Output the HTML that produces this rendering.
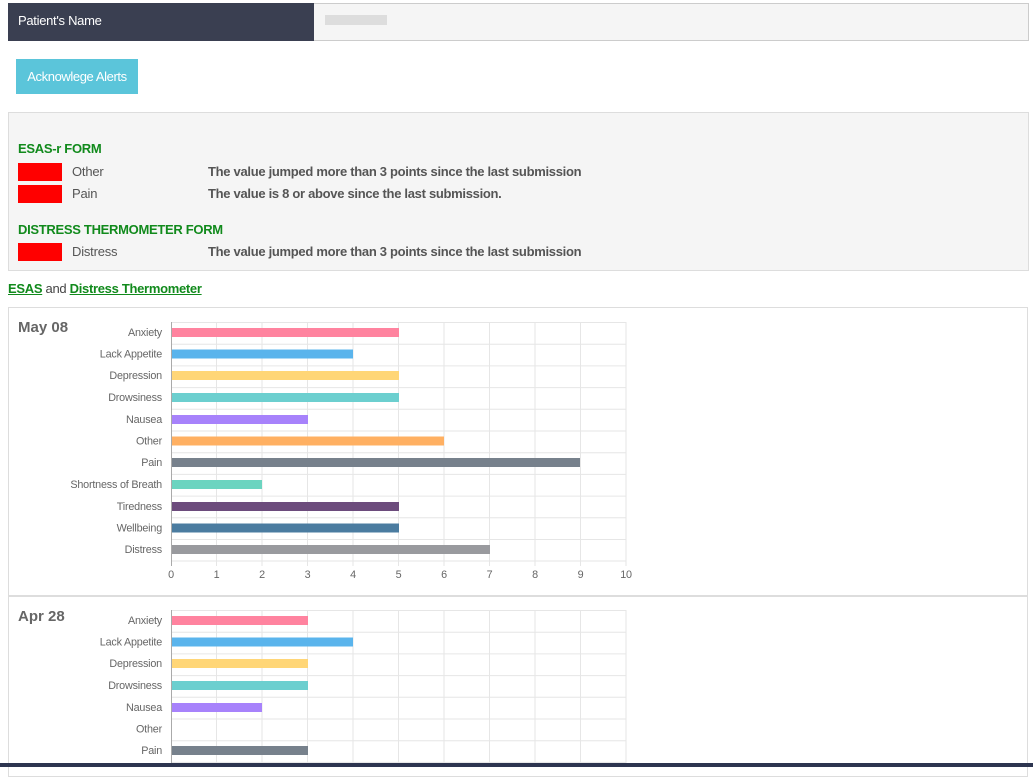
<!DOCTYPE html>
<html><head><meta charset="utf-8"><style>
body{margin:0;width:1033px;height:767px;overflow:hidden;background:#fff;font-family:"Liberation Sans",sans-serif;position:relative}
.a{position:absolute}
.lbl{font-size:13px;color:#555;letter-spacing:-0.2px}
.msg{font-size:13px;color:#555;font-weight:bold;letter-spacing:-0.3px}
.red{position:absolute;left:18px;width:44px;height:18px;background:#f00}
.h{font-size:13px;color:#118a1c;font-weight:bold;letter-spacing:-0.3px}
</style></head><body>
<div class="a" style="left:8px;top:3px;width:1019px;height:36px;border:1px solid #ccc;background:#f5f5f5"></div>
<div class="a" style="left:8px;top:3px;width:306px;height:38px;background:#3a3f51"></div>
<div class="a" style="left:18px;top:13px;color:#fff;font-size:13px;letter-spacing:-0.3px">Patient's Name</div>
<div class="a" style="left:325px;top:15px;width:62px;height:10px;background:#ddd"></div>
<div class="a" style="left:16px;top:59px;width:122px;height:35px;background:#5bc5da;color:#fff;font-size:13px;line-height:35px;text-align:center;letter-spacing:-0.4px">Acknowlege Alerts</div>
<div class="a" style="left:8px;top:112px;width:1019px;height:157px;background:#f5f5f5;border:1px solid #ddd"></div>
<div class="a h" style="left:18px;top:141px">ESAS-r FORM</div>
<div class="red" style="top:163px"></div><div class="a lbl" style="left:72px;top:164px">Other</div><div class="a msg" style="left:208px;top:164px">The value jumped more than 3 points since the last submission</div>
<div class="red" style="top:185px"></div><div class="a lbl" style="left:72px;top:186px">Pain</div><div class="a msg" style="left:208px;top:186px">The value is 8 or above since the last submission.</div>
<div class="a h" style="left:18px;top:222px">DISTRESS THERMOMETER FORM</div>
<div class="red" style="top:243px"></div><div class="a lbl" style="left:72px;top:244px">Distress</div><div class="a msg" style="left:208px;top:244px">The value jumped more than 3 points since the last submission</div>
<div class="a" style="left:8px;top:281px;font-size:13px;color:#444;letter-spacing:-0.3px"><u style="color:#118a1c;font-weight:bold">ESAS</u> and <u style="color:#118a1c;font-weight:bold">Distress Thermometer</u></div>
<div class="a" style="left:8px;top:307px;width:1018px;height:287px;border:1px solid #ddd;border-bottom:2px solid #ddd"></div>
<div class="a" style="left:8px;top:595px;width:1018px;height:180px;border:1px solid #ddd"></div>
<div class="a" style="left:18px;top:319px;font-size:15px;font-weight:bold;color:#666">May 08</div>
<div class="a" style="left:18px;top:608px;font-size:15px;font-weight:bold;color:#666">Apr 28</div>
<svg class="a" style="left:0;top:0" width="1033" height="767" font-family="Liberation Sans, sans-serif" font-size="10.8" fill="#666" letter-spacing="-0.2">
<g id="c1">
<g stroke="#e6e6e6" stroke-width="1">
<line x1="171" y1="322.5" x2="626" y2="322.5"/><line x1="171" y1="344.2" x2="626" y2="344.2"/><line x1="171" y1="365.9" x2="626" y2="365.9"/><line x1="171" y1="387.6" x2="626" y2="387.6"/><line x1="171" y1="409.3" x2="626" y2="409.3"/><line x1="171" y1="431" x2="626" y2="431"/><line x1="171" y1="452.7" x2="626" y2="452.7"/><line x1="171" y1="474.4" x2="626" y2="474.4"/><line x1="171" y1="496.1" x2="626" y2="496.1"/><line x1="171" y1="517.8" x2="626" y2="517.8"/><line x1="171" y1="539.5" x2="626" y2="539.5"/><line x1="171" y1="561" x2="626" y2="561"/>
<line x1="216.5" y1="322" x2="216.5" y2="566"/><line x1="262" y1="322" x2="262" y2="566"/><line x1="307.5" y1="322" x2="307.5" y2="566"/><line x1="353" y1="322" x2="353" y2="566"/><line x1="398.5" y1="322" x2="398.5" y2="566"/><line x1="444" y1="322" x2="444" y2="566"/><line x1="489.5" y1="322" x2="489.5" y2="566"/><line x1="535" y1="322" x2="535" y2="566"/><line x1="580.5" y1="322" x2="580.5" y2="566"/><line x1="626" y1="322" x2="626" y2="566"/>
</g>
<line x1="171.5" y1="322" x2="171.5" y2="566" stroke="#aaa"/>
<rect x="172" y="328" width="227" height="9" fill="#ff839f"/>
<rect x="172" y="349.5" width="181" height="9" fill="#5ab4ec"/>
<rect x="172" y="371" width="227" height="9" fill="#ffd677"/>
<rect x="172" y="393" width="227" height="9" fill="#6ccfcf"/>
<rect x="172" y="415" width="136" height="9" fill="#a782fb"/>
<rect x="172" y="436.5" width="272" height="9" fill="#ffb062"/>
<rect x="172" y="458" width="408" height="9" fill="#77818c"/>
<rect x="172" y="480" width="90" height="9" fill="#6cd4c0"/>
<rect x="172" y="502" width="227" height="9" fill="#6c4b7c"/>
<rect x="172" y="523.5" width="227" height="9" fill="#4b7ca0"/>
<rect x="172" y="545" width="318" height="9" fill="#999a9e"/>
<g text-anchor="end">
<text x="162" y="336">Anxiety</text><text x="162" y="357.5">Lack Appetite</text><text x="162" y="379">Depression</text><text x="162" y="401">Drowsiness</text><text x="162" y="423">Nausea</text><text x="162" y="444.5">Other</text><text x="162" y="466">Pain</text><text x="162" y="488">Shortness of Breath</text><text x="162" y="510">Tiredness</text><text x="162" y="531.5">Wellbeing</text><text x="162" y="553">Distress</text>
</g>
<g text-anchor="middle">
<text x="171" y="578">0</text><text x="216.5" y="578">1</text><text x="262" y="578">2</text><text x="307.5" y="578">3</text><text x="353" y="578">4</text><text x="398.5" y="578">5</text><text x="444" y="578">6</text><text x="489.5" y="578">7</text><text x="535" y="578">8</text><text x="580.5" y="578">9</text><text x="626" y="578">10</text>
</g>
</g>
<g transform="translate(0,288)">
<g stroke="#e6e6e6" stroke-width="1">
<line x1="171" y1="322.5" x2="626" y2="322.5"/><line x1="171" y1="344.2" x2="626" y2="344.2"/><line x1="171" y1="365.9" x2="626" y2="365.9"/><line x1="171" y1="387.6" x2="626" y2="387.6"/><line x1="171" y1="409.3" x2="626" y2="409.3"/><line x1="171" y1="431" x2="626" y2="431"/><line x1="171" y1="452.7" x2="626" y2="452.7"/><line x1="171" y1="474.4" x2="626" y2="474.4"/>
<line x1="216.5" y1="322" x2="216.5" y2="480"/><line x1="262" y1="322" x2="262" y2="480"/><line x1="307.5" y1="322" x2="307.5" y2="480"/><line x1="353" y1="322" x2="353" y2="480"/><line x1="398.5" y1="322" x2="398.5" y2="480"/><line x1="444" y1="322" x2="444" y2="480"/><line x1="489.5" y1="322" x2="489.5" y2="480"/><line x1="535" y1="322" x2="535" y2="480"/><line x1="580.5" y1="322" x2="580.5" y2="480"/><line x1="626" y1="322" x2="626" y2="480"/>
</g>
<line x1="171.5" y1="322" x2="171.5" y2="480" stroke="#aaa"/>
<rect x="172" y="328" width="136" height="9" fill="#ff839f"/>
<rect x="172" y="349.5" width="181" height="9" fill="#5ab4ec"/>
<rect x="172" y="371" width="136" height="9" fill="#ffd677"/>
<rect x="172" y="393" width="136" height="9" fill="#6ccfcf"/>
<rect x="172" y="415" width="90" height="9" fill="#a782fb"/>
<rect x="172" y="458" width="136" height="9" fill="#77818c"/>
<g text-anchor="end">
<text x="162" y="336">Anxiety</text><text x="162" y="357.5">Lack Appetite</text><text x="162" y="379">Depression</text><text x="162" y="401">Drowsiness</text><text x="162" y="423">Nausea</text><text x="162" y="444.5">Other</text><text x="162" y="466">Pain</text>
</g>
</g>
</svg>
<div class="a" style="left:0;top:763px;width:1033px;height:4px;background:#2d3550"></div>
</body></html>
